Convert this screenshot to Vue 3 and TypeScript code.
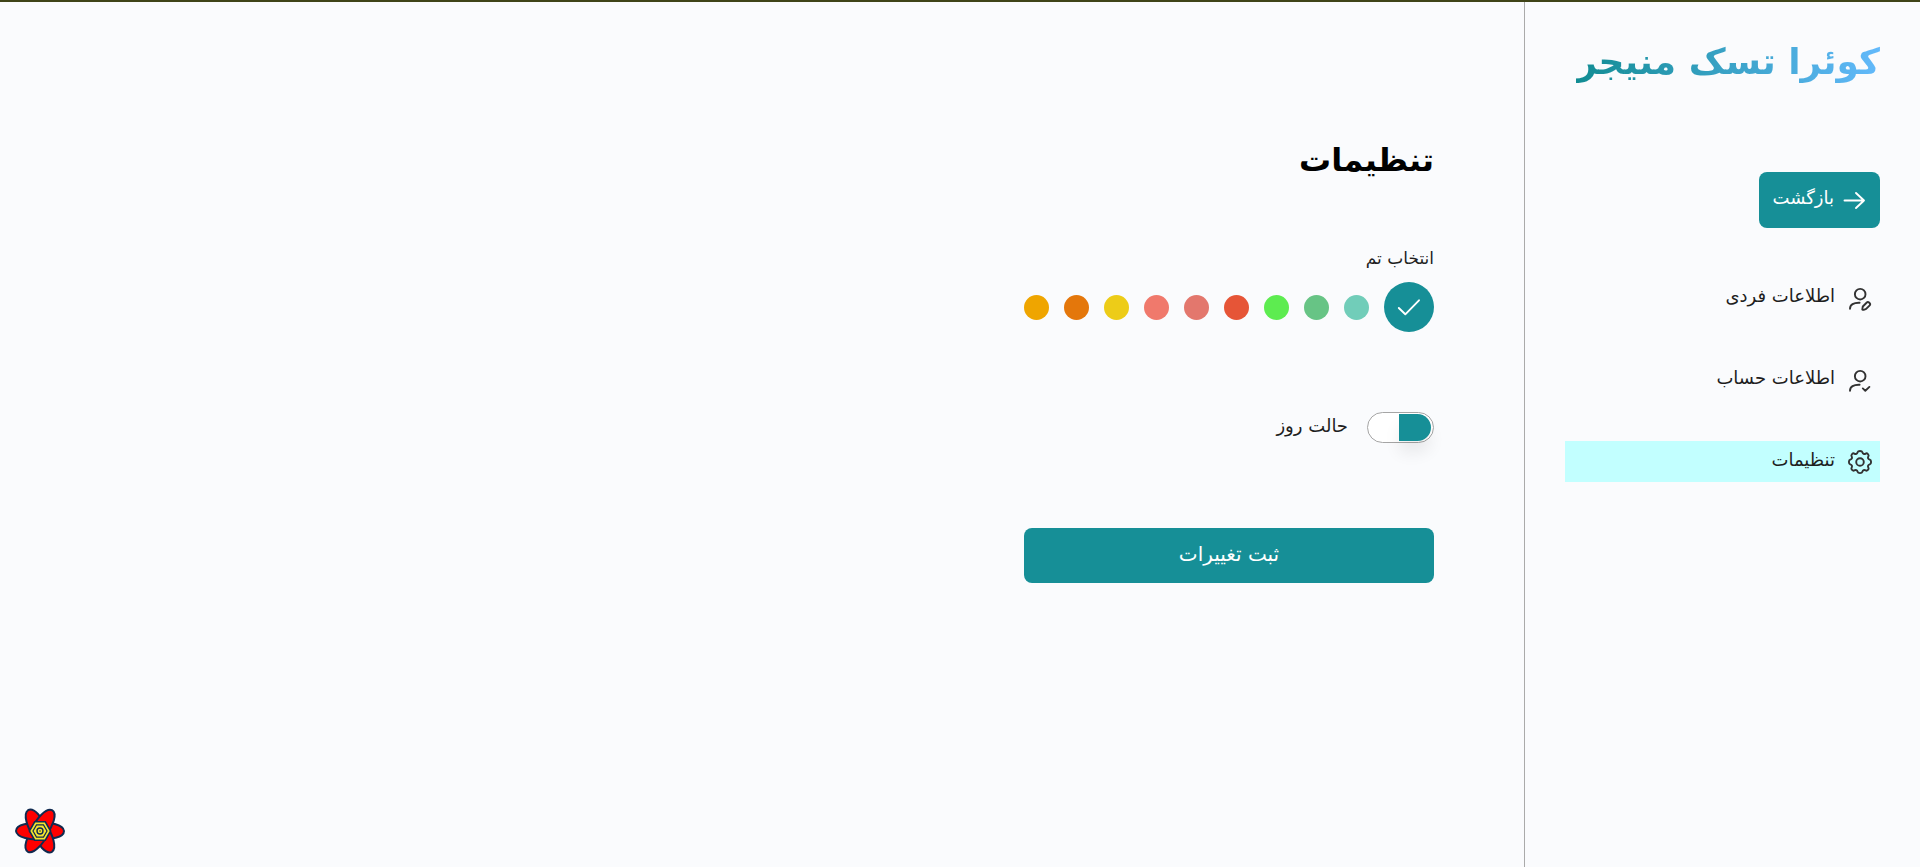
<script setup lang="ts">
import { ref } from 'vue'

interface Theme {
  name: string
  color: string
}

const themes: Theme[] = [
  { name: 'فیروزه‌ای', color: '#168f97' },
  { name: 'سبز آبی', color: '#71cdb9' },
  { name: 'سبز', color: '#67c485' },
  { name: 'سبز روشن', color: '#5dec50' },
  { name: 'قرمز', color: '#e65537' },
  { name: 'گلی', color: '#e3776d' },
  { name: 'صورتی', color: '#f0796c' },
  { name: 'زرد', color: '#edcc18' },
  { name: 'نارنجی', color: '#e4770b' },
  { name: 'کهربایی', color: '#efa500' },
]

const selected = ref('فیروزه‌ای')
const dayMode = ref(true)
const petals = [0, 60, 120, 180, 240, 300]
</script>

<template>
  <div class="page" dir="rtl" lang="fa">
    <aside class="sidebar">
      <div class="brand">کوئرا تسک منیجر</div>
      <button class="back" type="button">
        <svg class="icon" viewBox="0 0 24 24" aria-hidden="true">
          <path d="M2.5 12.5H22M14 5L22 12.5L14 20" />
        </svg>
        <span class="text">بازگشت</span>
      </button>
      <nav class="menu">
        <a class="item" href="#profile">
          <svg class="icon" viewBox="0 0 24 24" aria-hidden="true">
            <circle cx="12.2" cy="8.2" r="5.3" />
            <path d="M2 22.7C2 18.7 5.6 16.5 11.6 16.7" />
            <path d="M14.8 20.5L18.8 16.5C20.2 15.1 23.2 17.6 21.7 19.3L17.9 23.1C17 23.8 14.3 24.2 14.3 23.5Z" />
          </svg>
          <span class="text">اطلاعات فردی</span>
        </a>
        <a class="item" href="#account">
          <svg class="icon" viewBox="0 0 24 24" aria-hidden="true">
            <circle cx="12.2" cy="8.2" r="5.3" />
            <path d="M2 22.7C2 18.7 5.6 16.5 11.6 16.7" />
            <path d="M14.8 20.4L17.3 22.7L21.4 18.9" />
          </svg>
          <span class="text">اطلاعات حساب</span>
        </a>
        <a class="item active" href="#settings" aria-current="page">
          <svg class="icon" viewBox="0 0 24 24" aria-hidden="true">
            <circle cx="12" cy="12" r="3.8" />
            <path d="M9.6 2.2C10.1 .5 13.9 .5 14.4 2.2C14.9 4 16.2 4.5 17.7 3.6C19.2 2.7 21.3 4.8 20.4 6.3C19.5 7.8 20 9.1 21.8 9.6C23.5 10.1 23.5 13.9 21.8 14.4C20 14.9 19.5 16.2 20.4 17.7C21.3 19.2 19.2 21.3 17.7 20.4C16.2 19.5 14.9 20 14.4 21.8C13.9 23.5 10.1 23.5 9.6 21.8C9.1 20 7.8 19.5 6.3 20.4C4.8 21.3 2.7 19.2 3.6 17.7C4.5 16.2 4 14.9 2.2 14.4C.5 13.9 .5 10.1 2.2 9.6C4 9.1 4.5 7.8 3.6 6.3C2.7 4.8 4.8 2.7 6.3 3.6C7.8 4.5 9.1 4 9.6 2.2Z" />
          </svg>
          <span class="text">تنظیمات</span>
        </a>
      </nav>
    </aside>

    <main class="content">
      <h1 class="title">تنظیمات</h1>
      <form class="form" @submit.prevent>
        <fieldset class="themes">
          <legend class="legend">انتخاب تم</legend>
          <div class="swatches">
            <label
              v-for="theme in themes"
              :key="theme.name"
              class="swatch"
              :class="{ chosen: selected === theme.name }"
              :style="{ backgroundColor: theme.color }"
            >
              <input v-model="selected" class="hidden-input" type="radio" name="theme" :value="theme.name" :aria-label="theme.name" />
              <svg v-if="selected === theme.name" class="icon" viewBox="0 0 24 24" aria-hidden="true">
                <path d="M1.8 13L8.3 19.3L22 5.3" />
              </svg>
            </label>
          </div>
        </fieldset>
        <div class="mode">
          <input id="day-mode" v-model="dayMode" class="toggle" type="checkbox" role="switch" />
          <label class="text" for="day-mode">حالت روز</label>
        </div>
        <button class="submit" type="submit"><span class="text">ثبت تغییرات</span></button>
      </form>
    </main>

    <button class="devtools" type="button" aria-label="Devtools">
      <svg viewBox="0 0 50 50" aria-hidden="true">
        <g fill="#f00" stroke="#102a50" stroke-width="2">
          <path
            v-for="angle in petals"
            :key="angle"
            :transform="`rotate(${angle} 25 25)`"
            d="M25 17C33 15.5 48.5 18.5 49 25C49 32 35 33.5 25 32.5Z"
          />
        </g>
        <path fill="#f5e52d" stroke="#102a50" stroke-width="1.6" d="M19.7 15.8H30.3L35.6 25L30.3 34.2H19.7L14.4 25Z" />
        <path fill="none" stroke="#102a50" stroke-width="1.2" d="M21.5 18.9H28.5L32 25L28.5 31.1H21.5L18 25Z" />
        <circle cx="25" cy="25" r="3" fill="none" stroke="#102a50" stroke-width="1.4" />
        <circle cx="25" cy="25" r=".8" fill="#102a50" />
      </svg>
    </button>
  </div>
</template>

<style>
body {
  margin: 0;
}
</style>

<style scoped>
.page {
  box-sizing: border-box;
  display: flex;
  min-height: 100vh;
  border-top: 2px solid #3f4418;
  background: #fafbfd;
  color: #1e1e1e;
  font-family: 'DejaVu Sans', sans-serif;
  font-size: 18px;
  line-height: 24px;
}

.sidebar {
  box-sizing: border-box;
  display: flex;
  flex: 0 0 396px;
  flex-direction: column;
  align-items: flex-start;
  padding: 30px 40px;
  border-left: 1px solid #aaaaaa;
}

.brand {
  background: linear-gradient(to left, #62b9fb, #118c93);
  background-clip: text;
  color: transparent;
  font-size: 36px;
  font-weight: 700;
  line-height: 60px;
  white-space: nowrap;
}

.icon {
  flex: none;
  width: 24px;
  height: 24px;
  overflow: visible;
  fill: none;
  stroke: #323232;
  stroke-width: 1.9;
  stroke-linecap: round;
  stroke-linejoin: round;
}

.text {
  padding-bottom: 4px;
}

button {
  padding: 0;
  border: 0;
  font: inherit;
  cursor: pointer;
}

.back {
  display: flex;
  align-items: center;
  gap: 8px;
  height: 56px;
  margin-top: 80px;
  padding: 0 14px;
  border-radius: 8px;
  background: #168f97;
  color: #fff;
}

.back .icon,
.swatch .icon {
  stroke: #fff;
}

.menu {
  display: flex;
  align-self: stretch;
  flex-direction: column;
  gap: 41px;
  margin-top: 49px;
}

.item {
  display: flex;
  align-items: center;
  gap: 13px;
  height: 41px;
  padding: 0 8px;
  color: inherit;
  text-decoration: none;
}

.active {
  background: #c2ffff;
}

.content {
  flex: 1;
  padding: 134px 90px 40px;
}

.title {
  margin: 0;
  color: #000;
  font-size: 32px;
  line-height: 48px;
}

.form {
  display: flex;
  flex-direction: column;
  width: 410px;
  margin-top: 62px;
}

.themes {
  min-width: 0;
  margin: 0;
  padding: 0;
  border: 0;
}

.legend {
  padding: 0;
  font-size: 17px;
  line-height: 24px;
}

.swatches {
  display: flex;
  align-items: center;
  gap: 15px;
  margin-top: 12px;
}

.swatch {
  display: flex;
  align-items: center;
  justify-content: center;
  width: 25px;
  height: 25px;
  border-radius: 50%;
  cursor: pointer;
}

.chosen {
  width: 50px;
  height: 50px;
}

.hidden-input {
  position: absolute;
  opacity: 0;
}

.mode {
  display: flex;
  align-items: center;
  gap: 19px;
  margin-top: 80px;
}

.toggle {
  box-sizing: border-box;
  width: 67px;
  height: 31px;
  margin: 0;
  padding: 1px 2px 2px;
  border: 1px solid #a5a5a5;
  border-radius: 16px;
  background: #fff;
  appearance: none;
  cursor: pointer;
}

.toggle::before {
  display: block;
  width: 32px;
  height: 27px;
  margin-right: auto;
  border-radius: 14px 0 0 14px;
  background: #168f97;
  box-shadow: 0 12px 16px rgb(0 0 0 / 7%);
  content: '';
}

.toggle:checked::before {
  margin-right: 0;
  border-radius: 0 14px 14px 0;
}

.submit {
  display: flex;
  align-items: center;
  justify-content: center;
  height: 55px;
  margin-top: 85px;
  border-radius: 8px;
  background: #168f97;
  color: #fff;
  font-size: 20px;
}

.devtools {
  position: fixed;
  bottom: 11px;
  left: 15px;
  width: 50px;
  height: 50px;
  background: none;
}

.devtools svg {
  display: block;
  width: 100%;
  height: 100%;
}
</style>
